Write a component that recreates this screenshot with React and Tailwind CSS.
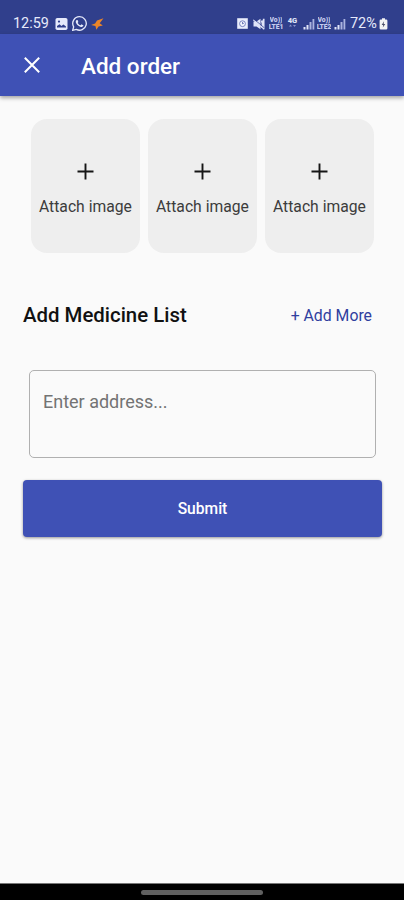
import React from "react";

function PictureIcon() {
  return (
    <svg className="ml-[6px] h-[12px] w-[13px] shrink-0" viewBox="0 0 13 12">
      <rect x="0.5" y="0" width="12" height="12" rx="1.8" fill="#e6eafb" />
      <path d="M2 9.5V8L4.600 6.200 6.400 8 8.400 6.600 11 8.400V9.500Z" fill="#303f8c" />
      <circle cx="4" cy="3.6" r="1.1" fill="#303f8c" />
    </svg>
  );
}

function WhatsappIcon() {
  return (
    <svg className="ml-[4px] h-[15px] w-[15px] shrink-0" viewBox="0 0 24 24" fill="#e6eafb">
      <path d="M17.472 14.382c-.297-.149-1.758-.867-2.03-.967-.273-.099-.471-.148-.67.15-.197.297-.767.966-.94 1.164-.173.199-.347.223-.644.075-.297-.15-1.255-.463-2.39-1.475-.883-.788-1.48-1.761-1.653-2.059-.173-.297-.018-.458.13-.606.134-.133.298-.347.446-.52.149-.174.198-.298.298-.497.099-.198.05-.371-.025-.52-.075-.149-.669-1.612-.916-2.207-.242-.579-.487-.5-.669-.51a12.8 12.8 0 0 0-.57-.01c-.198 0-.52.074-.792.372-.272.297-1.04 1.016-1.04 2.479 0 1.462 1.065 2.875 1.213 3.074.149.198 2.096 3.2 5.077 4.487.709.306 1.262.489 1.694.625.712.227 1.36.195 1.871.118.571-.085 1.758-.719 2.006-1.413.248-.694.248-1.289.173-1.413-.074-.124-.272-.198-.57-.347z" />
      <path d="M12.05 1.1a10.8 10.8 0 0 0-9.4 16.2L1.1 22.9l5.8-1.5A10.8 10.8 0 1 0 12.05 1.1z" fill="none" stroke="#e6eafb" strokeWidth="2.1" />
    </svg>
  );
}

function BoltIcon() {
  return (
    <svg className="ml-[4px] h-[12px] w-[13px] shrink-0" viewBox="0 0 13 12">
      <path d="M12.500 0.200 6 2.600 4.100 5.400 0.100 6.900 4.400 8 5.400 11.800 7.500 8.400 11.800 7.600 8.700 5.300Z" fill="#ec8527" />
    </svg>
  );
}

function AlarmIcon() {
  return (
    <svg className="h-[11px] w-[11px] shrink-0" viewBox="0 0 11 11">
      <path d="M0.200 0.200h10.600v10.600h-10.600z" fill="#e9edfc" />
      <circle cx="5.500" cy="5.700" r="2.900" fill="#f4f6ff" stroke="#6a76b8" strokeWidth="0.900" />
      <path d="M5.500 4v1.900l1.400-.7" fill="none" stroke="#5260a8" strokeWidth="0.800" />
    </svg>
  );
}

function MuteIcon() {
  return (
    <svg className="ml-[5px] h-[12px] w-[12px] shrink-0" viewBox="0 0 12 12">
      <path d="M0.500 3.500h3L7.500 0.800v10.400L3.500 8.500h-3z" fill="#dfe4f8" />
      <path d="M8.600 2.500q2 3.500 0 7M10.700 0.800v10.500" fill="none" stroke="#dfe4f8" strokeWidth="1.700" />
      <path d="M0.500 0.800 11.500 10" stroke="#303f8c" strokeWidth="0.800" />
      <path d="M0.200 1.800 11 11.200" stroke="#dfe4f8" strokeWidth="1.100" />
    </svg>
  );
}

function Volte({ line, className }) {
  return (
    <div className={`flex h-[14px] w-[16px] shrink-0 flex-col items-center text-[6.800px] leading-[7px] font-black text-[#c5ccee] ${className}`}>
      <span className="h-[7px] overflow-hidden">Vo))</span>
      <span className="h-[7px] overflow-hidden tracking-[-0.1px]">{line}</span>
    </div>
  );
}

function FourG() {
  return (
    <div className="ml-[3px] flex h-[13px] w-[11px] shrink-0 flex-col items-center text-[7.500px] leading-[7px] font-black text-[#dfe4f8]">
      <span>4G</span>
      <svg className="h-[4px] w-[7px]" viewBox="0 0 7 4">
        <path d="M0 2.500 1.500 0.500 3 2.500zM4 1 5.500 3 7 1z" fill="#8993cb" />
      </svg>
    </div>
  );
}

function Signal({ className }) {
  return (
    <svg className={`h-[12px] w-[12px] shrink-0 ${className}`} viewBox="0 0 12 12">
      <path d="M0.500 9h2v2.500h-2zM3.500 7h2v4.500h-2z" fill="#dfe4f8" />
      <path d="M6.500 4h2v7.500h-2zM9.500 1h1.800v10.500h-1.800z" fill="#aab3df" />
    </svg>
  );
}

function BatteryIcon() {
  return (
    <svg className="ml-[2px] h-[12px] w-[9px] shrink-0" viewBox="0 0 9 12">
      <path d="M3 0.300h3v1.300h1.200a1.200 1.200 0 0 1 1.200 1.200v7.500a1.300 1.300 0 0 1-1.300 1.300H1.900a1.300 1.300 0 0 1-1.300-1.300V2.800a1.200 1.200 0 0 1 1.200-1.200H3z" fill="#f2f3f3" />
      <path d="M5 3.300 2.700 6.900h1.500l-.4 2.700 2.500-3.700H4.700z" fill="#4a4e68" />
    </svg>
  );
}

function StatusBar() {
  return (
    <div className="flex h-[34px] items-start bg-[#303f8c] pr-[16px] pl-[13px] text-[#e6eafb]">
      <div className="mt-[16px] flex h-[15px] items-center">
        <span className="w-[36px] text-[14.400px] leading-[15px] whitespace-nowrap">12:59</span>
        <PictureIcon />
        <WhatsappIcon />
        <BoltIcon />
      </div>
      <div className="mt-[16px] ml-auto flex h-[15px] items-center">
        <AlarmIcon />
        <MuteIcon />
        <Volte line="LTE1" className="ml-[3px]" />
        <FourG />
        <Signal className="ml-[5px]" />
        <Volte line="LTE2" className="ml-[1px]" />
        <Signal className="ml-[2px]" />
        <span className="ml-[4px] w-[27px] text-[14.400px] leading-[15px] whitespace-nowrap">72%</span>
        <BatteryIcon />
      </div>
    </div>
  );
}

function AttachTile() {
  return (
    <button className="flex h-[134px] w-[109.500px] flex-col items-center rounded-[16px] bg-[#eeeeee] pt-[44px]">
      <svg className="h-[17px] w-[17px]" viewBox="0 0 17 17">
        <path d="M8.500 0.500v16M0.500 8.500h16" stroke="#151515" strokeWidth="1.900" />
      </svg>
      <span className="mt-[17px] text-[15.700px] leading-[20px] whitespace-nowrap text-[#3c3c3c]">Attach image</span>
    </button>
  );
}

export default function App() {
  return (
    <div className="flex h-[900px] w-[404px] flex-col overflow-hidden bg-[#fafafa] font-['Roboto',sans-serif]">
      <StatusBar />
      <header className="flex h-[62px] items-center bg-[#3f51b5] pl-[24px] text-white shadow-[0_2px_4px_rgba(0,0,0,0.35)]">
        <svg className="h-[16px] w-[16px]" viewBox="0 0 16 16">
          <path d="M0.800 0.800 15.200 15.200M15.200 0.800 0.800 15.200" stroke="#fff" strokeWidth="2" />
        </svg>
        <h1 className="mt-[2px] ml-[41px] text-[22.500px] leading-[26px] font-medium">Add order</h1>
      </header>
      <main className="flex flex-1 flex-col">
        <div className="mt-[23px] ml-[30.700px] flex gap-[7.500px]">
          <AttachTile />
          <AttachTile />
          <AttachTile />
        </div>
        <div className="mt-[50px] flex h-[24px] items-center justify-between pr-[32px] pl-[23px]">
          <h2 className="text-[20.400px] leading-[24px] font-medium text-[#111111]">Add Medicine List</h2>
          <button className="mt-[2px] text-[15.800px] leading-[24px] text-[#303f9f]">+ Add More</button>
        </div>
        <div className="mt-[43px] mr-[28px] ml-[29px] h-[88px] rounded-[5px] border border-[#b0b0b0] pt-[20px] pl-[13px] text-[18px] leading-[22px] text-[#737373]">
          Enter address...
        </div>
        <button className="mt-[22px] mr-[22px] ml-[23px] h-[57px] rounded-[4px] bg-[#3f51b5] pt-[2px] text-[15.600px] font-medium text-white shadow-[0_1px_3px_rgba(0,0,0,0.4)]">
          Submit
        </button>
      </main>
      <div className="flex h-[17px] items-center justify-center border-t border-[#777777] bg-black">
        <div className="h-[5px] w-[122px] rounded-full bg-[#606060]" />
      </div>
    </div>
  );
}
